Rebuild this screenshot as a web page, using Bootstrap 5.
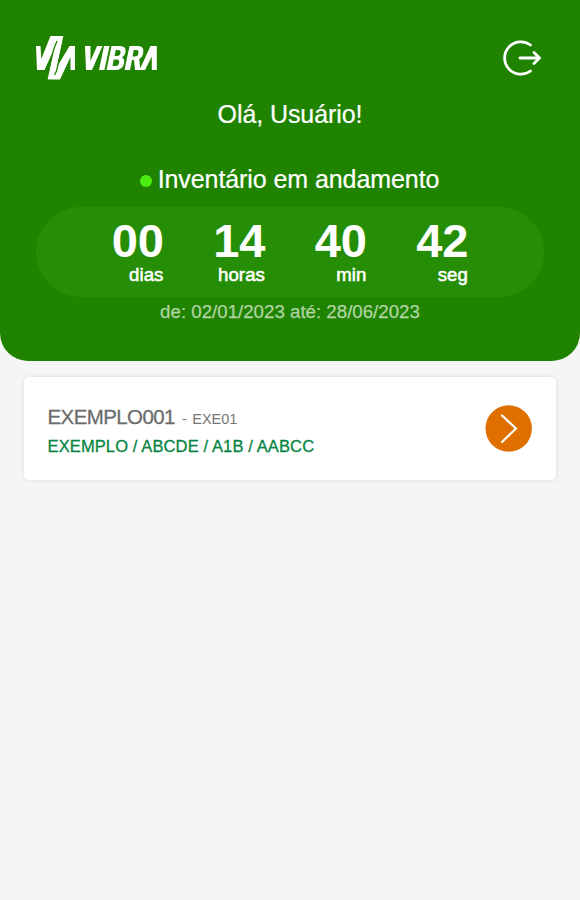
<!DOCTYPE html>
<html lang="pt-BR">
<head>
<meta charset="utf-8">
<meta name="viewport" content="width=device-width, initial-scale=1">
<title>Vibra - Inventário</title>
<link href="https://cdn.jsdelivr.net/npm/bootstrap@5.3.0/dist/css/bootstrap.min.css" rel="stylesheet">
<style>
body{background:#f5f5f5;font-family:"Liberation Sans",Arial,sans-serif;min-height:100vh}
.top-panel{background:#1f8300;height:361px;border-radius:0 0 28px 28px;padding:36px 36px 0}
.brand-row{height:44px}
.greeting,.status{font-size:25px;line-height:30px;letter-spacing:-.08px;-webkit-text-stroke:.2px #fff}
.greeting{margin-top:19px}
.status{margin-top:35px;gap:6px;padding-right:1px}
.status-dot{width:12px;height:12px;background:#4cee12;margin-top:3px}
.timer{background:#268e06;height:90px;margin-top:13px;padding-left:75.500px;gap:49.500px}
.unit{width:52px;padding-top:10px}
.unit-value{font-size:47px;line-height:48px;letter-spacing:-.3px}
.unit-label{font-size:18.600px;line-height:20px;letter-spacing:.1px;-webkit-text-stroke:.55px #fff}
.period{font-size:18.700px;line-height:22px;margin-top:4px;color:#b0d4a2;-webkit-text-stroke:.25px #b0d4a2}
.entry{margin:16px 24px 0;height:103px;border-radius:5px;box-shadow:0 0 5px rgba(0,0,0,.1);padding:0 24px 0 23.500px}
.entry-text{padding-top:4px}
.entry-name{font-size:20.500px;line-height:26px;letter-spacing:-.6px;color:#6c6c6c;-webkit-text-stroke:.3px #6c6c6c}
.entry-code{font-size:14.500px;letter-spacing:0;word-spacing:1.500px;margin-left:2px;color:#777;-webkit-text-stroke:0}
.entry-path{font-size:16.500px;line-height:22px;letter-spacing:.12px;margin-top:3px;color:#058442;-webkit-text-stroke:.3px #058442}
</style>
<script src="https://cdn.jsdelivr.net/npm/bootstrap@5.3.0/dist/js/bootstrap.bundle.min.js"></script>
</head>
<body>
<header class="top-panel text-white">
  <div class="brand-row d-flex justify-content-between align-items-center">
    <svg width="122" height="44" viewBox="0 0 122 44" fill="#fff" role="img" aria-label="Vibra">
      <path d="M0 10H4.500L5.300 23 14.500 0H27.300L21 31 33.500 10H39V34H34.500V21L24 43.500H11.700L17.500 14 8.500 34H1Z"/>
      <path d="M21 5 17.800 13 12.500 35M26.500 9 20.500 35 18.500 39" fill="none" stroke="#1f8300" stroke-width="1.300"/>
      <path d="M49 10h5.500v15L61 10h5.500L56 34h-6Z"/>
      <path d="M68 10h5.500L68.500 34H63Z"/>
      <path fill-rule="evenodd" d="M75.500 10H84q6.500 0 5.500 6-.6 4-3.500 5.500 3 1.500 2 6-1.300 6.500-8 6.500h-9.500Zm4.300 4-1.200 6H81q3 0 3.500-3t-2.200-3Zm-2 9.500L76.500 30h3q3 0 3.600-3.300.6-3.200-2.400-3.200Z"/>
      <path fill-rule="evenodd" d="M93.500 10h8.500q6.500 0 5.200 7-.8 4.500-4 6l1.300 11H99l-1-10h-2l-2 10h-5.500Zm4.300 4-1.300 6.500H99q2.800 0 3.400-3.300t-2.200-3.200Z"/>
      <path d="M114.500 10h6.300v24h-5V20.500L109 34h-5.500Z"/>
    </svg>
    <svg width="42" height="42" viewBox="0 0 42 42" fill="none" stroke="#fff" stroke-width="2.800" stroke-linecap="round" stroke-linejoin="round" role="img" aria-label="Sair">
      <path d="M28.500 8A16.200 16.200 0 1 0 28.500 34M18 21h18.500M32 15.500l5.500 5.500-5.500 5.500"/>
    </svg>
  </div>
  <div class="greeting text-center">Olá, Usuário!</div>
  <div class="status d-flex justify-content-center align-items-center"><span class="status-dot rounded-circle"></span><span>Inventário em andamento</span></div>
  <div class="timer rounded-pill d-flex">
    <div class="unit d-flex flex-column align-items-end"><div class="unit-value fw-bold">00</div><div class="unit-label">dias</div></div>
    <div class="unit d-flex flex-column align-items-end"><div class="unit-value fw-bold">14</div><div class="unit-label">horas</div></div>
    <div class="unit d-flex flex-column align-items-end"><div class="unit-value fw-bold">40</div><div class="unit-label">min</div></div>
    <div class="unit d-flex flex-column align-items-end"><div class="unit-value fw-bold">42</div><div class="unit-label">seg</div></div>
  </div>
  <div class="period text-center">de: 02/01/2023 até: 28/06/2023</div>
</header>
<main>
  <div class="entry bg-white d-flex justify-content-between align-items-center">
    <div class="entry-text">
      <div class="entry-name">EXEMPLO001 <span class="entry-code">- EXE01</span></div>
      <div class="entry-path">EXEMPLO / ABCDE / A1B / AABCC</div>
    </div>
    <svg width="47" height="47" viewBox="0 0 47 47" role="img" aria-label="Abrir">
      <circle cx="23.700" cy="23.500" r="23.200" fill="#df7000"/>
      <path d="M17 10.500 31 23.500 17 37" fill="none" stroke="#fff" stroke-width="2.200" stroke-linecap="round" stroke-linejoin="round"/>
    </svg>
  </div>
</main>
</body>
</html>
